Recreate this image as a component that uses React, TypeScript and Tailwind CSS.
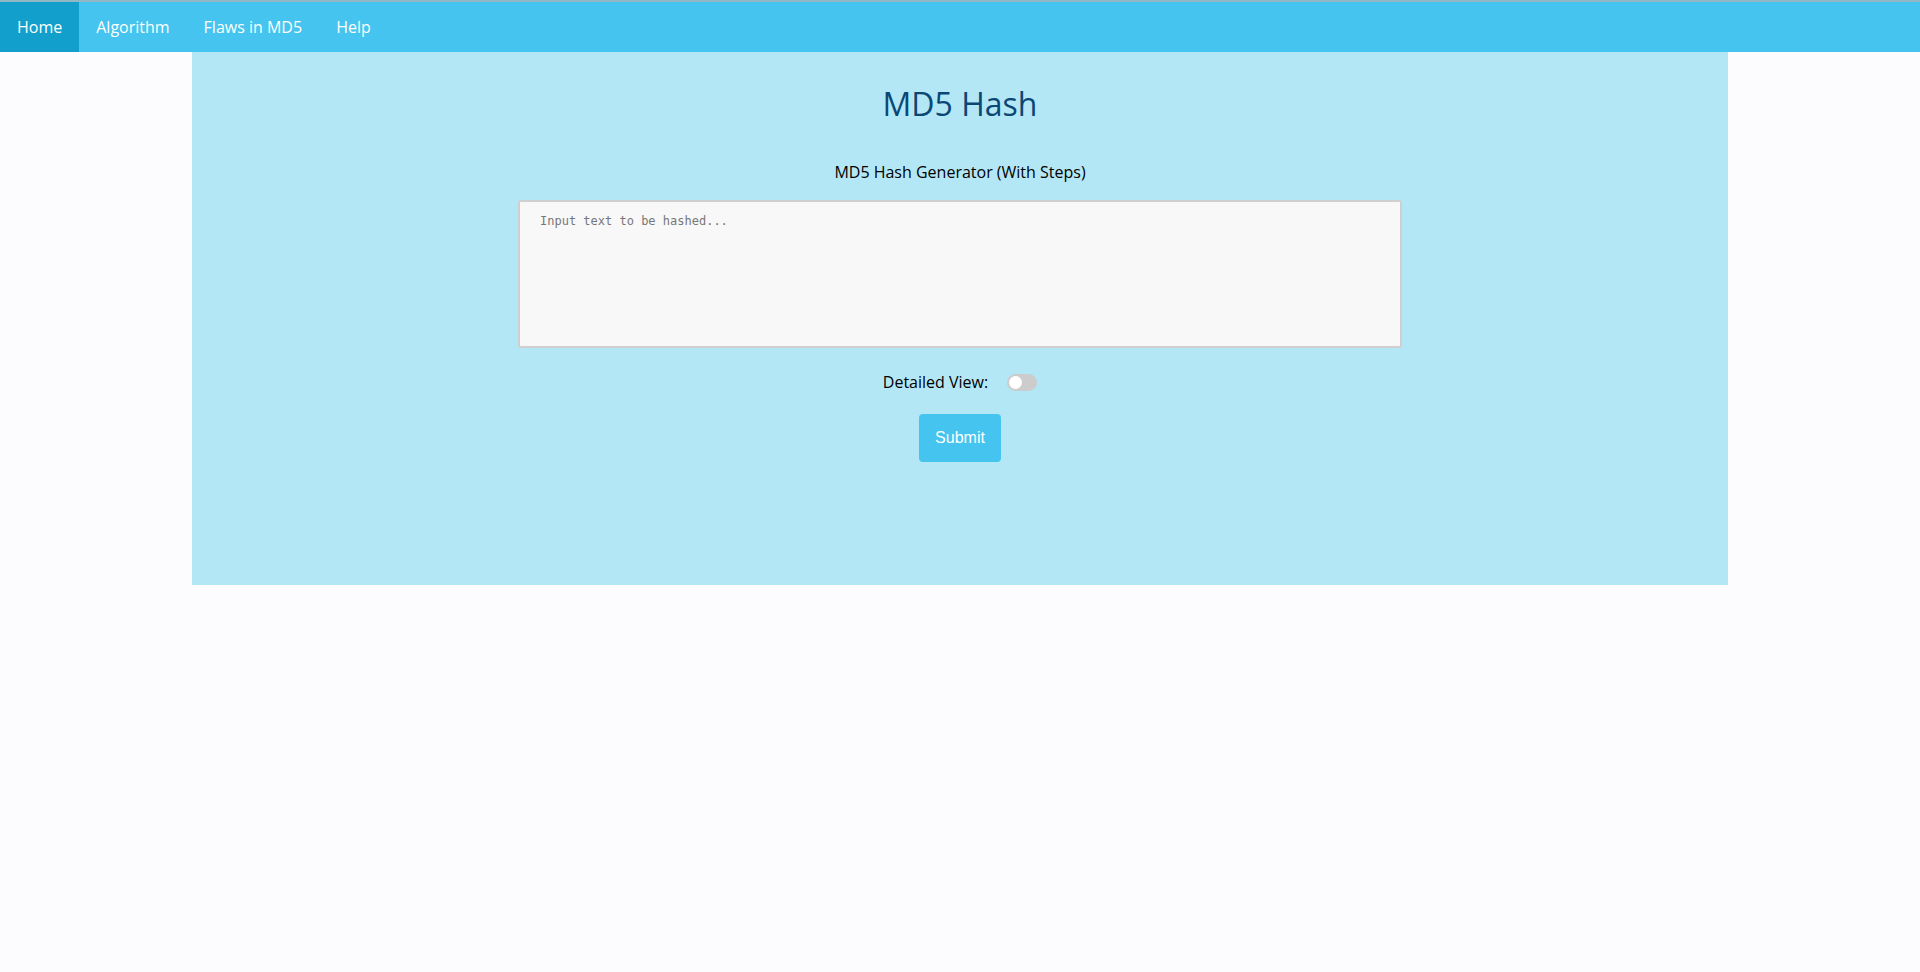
import { useState } from "react";

const navItems = ["Home", "Algorithm", "Flaws in MD5", "Help"];

function Toggle() {
  const [on, setOn] = useState(false);
  return (
    <button
      type="button"
      onClick={() => setOn(!on)}
      className={`relative h-[17px] w-[30px] rounded-full ${on ? "bg-[#44c4ee]" : "bg-[#cccccc]"}`}
    >
      <span
        className={`absolute top-[2px] h-[13px] w-[13px] rounded-full bg-white ${on ? "left-[15px]" : "left-[2px]"}`}
      />
    </button>
  );
}

export default function App() {
  return (
    <div className="min-h-[972px] bg-[#fcfcff] font-['Open_Sans',sans-serif]">
      <nav className="flex h-[52px] border-t-[2px] border-[#8fb8c4] bg-[#44c4ee]">
        {navItems.map((item, i) => (
          <a
            key={item}
            href="#"
            className={`flex items-center px-[17px] text-[16px] text-white ${i === 0 ? "bg-[#129fcc]" : ""}`}
          >
            {item}
          </a>
        ))}
      </nav>

      <main className="mx-auto flex w-[1536px] flex-col items-center bg-[#b4e7f6] pt-[30px] pb-[123px]">
        <h1 className="text-[32px] leading-[44px] text-[#0b4775]">MD5 Hash</h1>

        <p className="mt-[34px] text-[16px] leading-[24px] text-black">MD5 Hash Generator (With Steps)</p>

        <textarea
          placeholder="Input text to be hashed..."
          className="mt-[16px] h-[148px] w-[884px] resize-none rounded-[3px] border-2 border-[#cfcfcf] bg-[#f8f8f8] px-[20px] pt-[10px] font-['DejaVu_Sans_Mono',monospace] text-[12px] leading-[18px] text-[#333] placeholder:text-[#777] focus:outline-none"
        />

        <div className="mt-[22px] flex items-center gap-[19px]">
          <span className="text-[16px] leading-[24px] text-black">Detailed View:</span>
          <Toggle />
        </div>

        <button
          type="button"
          className="mt-[20px] h-[48px] w-[82px] rounded-[4px] bg-[#44c4ee] font-['Liberation_Sans',sans-serif] text-[16px] text-white"
        >
          Submit
        </button>
      </main>
    </div>
  );
}
